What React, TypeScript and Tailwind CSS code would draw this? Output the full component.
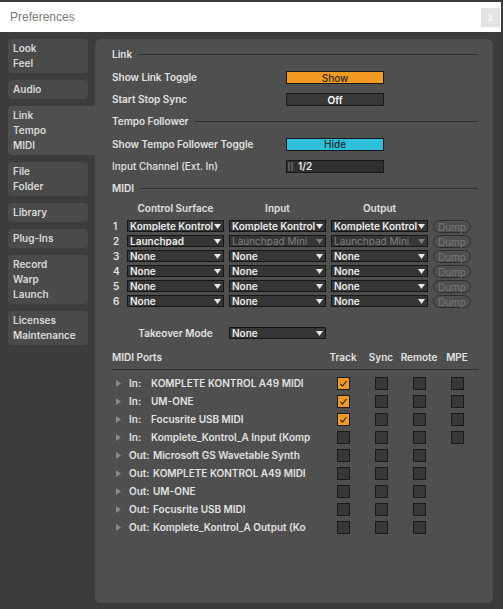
import React from 'react';

const sideItems = [
  { lines: ['Look', 'Feel'] },
  { lines: ['Audio'] },
  { lines: ['Link', 'Tempo', 'MIDI'], active: true },
  { lines: ['File', 'Folder'] },
  { lines: ['Library'] },
  { lines: ['Plug-Ins'] },
  { lines: ['Record', 'Warp', 'Launch'] },
  { lines: ['Licenses', 'Maintenance'] },
];

const surfaces = [
  { cs: 'Komplete Kontrol', input: 'Komplete Kontrol', output: 'Komplete Kontrol' },
  { cs: 'Launchpad', input: 'Launchpad Mini', output: 'Launchpad Mini', dim: true },
  { cs: 'None', input: 'None', output: 'None' },
  { cs: 'None', input: 'None', output: 'None' },
  { cs: 'None', input: 'None', output: 'None' },
  { cs: 'None', input: 'None', output: 'None' },
];

// names are cut at the column edge, same as the app does
const ports = [
  { dir: 'In:', name: 'KOMPLETE KONTROL A49 MIDI', track: true, mpe: true },
  { dir: 'In:', name: 'UM-ONE', track: true, mpe: true },
  { dir: 'In:', name: 'Focusrite USB MIDI', track: true, mpe: true },
  { dir: 'In:', name: 'Komplete_Kontrol_A Input (Komp', mpe: true },
  { dir: 'Out:', name: 'Microsoft GS Wavetable Synth' },
  { dir: 'Out:', name: 'KOMPLETE KONTROL A49 MIDI' },
  { dir: 'Out:', name: 'UM-ONE' },
  { dir: 'Out:', name: 'Focusrite USB MIDI' },
  { dir: 'Out:', name: 'Komplete_Kontrol_A Output (Ko' },
];

function Arrow({ dim }: { dim?: boolean }) {
  return (
    <svg width="7" height="5" viewBox="0 0 7 5" className="shrink-0">
      <path d="M0 0 L7 0 L3.5 5 Z" fill={dim ? '#7c7c7c' : '#e8e8e8'} />
    </svg>
  );
}

function Select({ value, dim }: { value: string; dim?: boolean }) {
  return (
    <div className="w-[97px] h-[12px] bg-[#363636] border border-[#161616] flex items-center pl-[2px] pr-[2px]">
      <span className={`flex-1 truncate leading-none ${dim ? 'text-[#7f7f7f] font-normal' : 'text-[#ececec]'}`}>{value}</span>
      <Arrow dim={dim} />
    </div>
  );
}

function Heading({ title, h }: { title: string; h: string }) {
  return (
    <div className={`flex items-center ${h}`}>
      <span className="text-[#e2e2e2]">{title}</span>
      <div className="flex-1 h-px bg-[#2e2e2e] ml-[6px]" />
    </div>
  );
}

function Toggle({ label, className }: { label: string; className: string }) {
  return (
    <div className={`w-[98px] h-[13px] border border-[#181818] flex items-center justify-center leading-none ${className}`}>
      {label}
    </div>
  );
}

function Checkbox({ checked }: { checked?: boolean }) {
  return (
    <div className={`w-[13px] h-[13px] border border-[#1a1a1a] ${checked ? 'bg-[#f39a22]' : 'bg-[#383838]'}`}>
      {checked && (
        <svg width="11" height="11" viewBox="0 0 11 11">
          <path d="M2.5 6 L4.5 8 L8.5 3" stroke="#2a2a2a" strokeWidth="1.2" fill="none" />
        </svg>
      )}
    </div>
  );
}

export default function App() {
  return (
    <div className="w-[503px] h-[609px] bg-[#3c3c3c] overflow-hidden flex flex-col font-['Inter',sans-serif] text-[10px] font-semibold text-[#e2e2e2]">
      <div className="mt-[2px] mr-[2px] h-[30px] bg-white flex items-center justify-between pl-[10px] pr-[1px]">
        <span className="font-['Liberation_Sans',sans-serif] font-normal text-[12px] text-[#7a7a7a]">Preferences</span>
        <div className="w-[19px] h-[19px] bg-[#e3e3e3] flex items-center justify-center text-white text-[11px] font-normal">x</div>
      </div>

      <div className="flex pt-[7px]">
        <div className="w-[95px] pl-[8px] flex flex-col gap-[7px]">
          {sideItems.map((item) => (
            <div
              key={item.lines[0]}
              className={`py-[2px] pl-[5px] leading-[15px] text-[#dadada] ${item.active ? 'bg-[#4f4f4f] rounded-l-[4px]' : 'bg-[#4a4a4a] rounded-[4px] mr-[7px]'}`}
            >
              {item.lines.map((l) => (
                <div key={l}>{l}</div>
              ))}
            </div>
          ))}
        </div>

        <div className="w-[398px] h-[564px] bg-[#4f4f4f] rounded-[6px] pt-[3px] pl-[17px] pr-[15px]">
          <Heading title="Link" h="h-[24px]" />
          <div className="flex items-center h-[23px]">
            <span className="w-[174px]">Show Link Toggle</span>
            <Toggle label="Show" className="bg-[#f39a22] text-[#2a2a2a] font-medium" />
          </div>
          <div className="flex items-center h-[21px]">
            <span className="w-[174px]">Start Stop Sync</span>
            <Toggle label="Off" className="bg-[#383838] text-white" />
          </div>
          <Heading title="Tempo Follower" h="h-[23px]" />
          <div className="flex items-center h-[22px]">
            <span className="w-[174px]">Show Tempo Follower Toggle</span>
            <Toggle label="Hide" className="bg-[#2ebfda] text-[#1e2a2e] font-medium" />
          </div>
          <div className="flex items-center h-[22px]">
            <span className="w-[174px] font-medium">Input Channel (Ext. In)</span>
            <div className="w-[98px] h-[13px] bg-[#303030] border border-[#181818] flex items-center pl-[1px] gap-[5px]">
              <div className="flex gap-[1px]">
                <div className="w-[2px] h-[9px] bg-[#5a5a5a]" />
                <div className="w-[2px] h-[9px] bg-[#5a5a5a]" />
              </div>
              <span className="leading-none text-[#e8e8e8]">1/2</span>
            </div>
          </div>
          <Heading title="MIDI" h="h-[22px]" />

          <div className="flex items-end h-[20px] pb-[3px] pl-[15px] gap-[5px]">
            <div className="w-[97px] text-center">Control Surface</div>
            <div className="w-[97px] text-center">Input</div>
            <div className="w-[97px] text-center">Output</div>
          </div>
          {surfaces.map((s, i) => (
            <div key={i} className="flex items-center h-[15px]">
              <span className="w-[15px] pl-[1px]">{i + 1}</span>
              <div className="flex gap-[5px]">
                <Select value={s.cs} />
                <Select value={s.input} dim={s.dim} />
                <Select value={s.output} dim={s.dim} />
                <div className="w-[38px] h-[13px] rounded-full border border-[#2e2e2e] flex items-center justify-center text-[#787878] font-normal leading-none">
                  Dump
                </div>
              </div>
            </div>
          ))}

          <div className="flex items-center h-[24px] mt-[12px] pl-[15px] gap-[5px]">
            <div className="w-[97px] text-center">Takeover Mode</div>
            <Select value="None" />
          </div>

          <div className="flex items-center h-[24px] mt-[1px] border-b border-[#2e2e2e] mr-[-1px]">
            <span className="w-[212px]">MIDI Ports</span>
            {['Track', 'Sync', 'Remote', 'MPE'].map((h) => (
              <div key={h} className="w-[38px] text-center">{h}</div>
            ))}
          </div>

          <div className="mt-[4px]">
            {ports.map((p, i) => (
              <div key={i} className="flex items-center h-[18px]">
                <div className="w-[212px] flex items-center pl-[4px]">
                  <svg width="5" height="7" viewBox="0 0 5 7" className="shrink-0">
                    <path d="M0 0 L5 3.5 L0 7 Z" fill="#8a8a8a" />
                  </svg>
                  <div className="ml-[8px] w-[186px] flex overflow-hidden whitespace-nowrap">
                    <span className={`shrink-0 ${p.dir === 'In:' ? 'w-[22px]' : 'w-[24px]'}`}>{p.dir}</span>
                    <span>{p.name}</span>
                  </div>
                </div>
                <div className="w-[38px] flex justify-center"><Checkbox checked={p.track} /></div>
                <div className="w-[38px] flex justify-center"><Checkbox /></div>
                <div className="w-[38px] flex justify-center"><Checkbox /></div>
                <div className="w-[38px] flex justify-center">{p.mpe && <Checkbox />}</div>
              </div>
            ))}
          </div>
        </div>
      </div>
    </div>
  );
}
